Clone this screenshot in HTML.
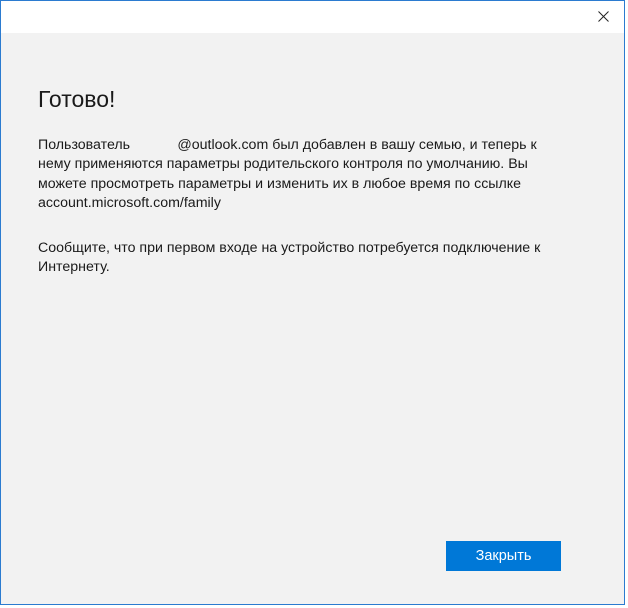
<!DOCTYPE html>
<html><head><meta charset="utf-8"><style>
html,body{margin:0;padding:0;width:628px;height:608px;background:#fff;overflow:hidden}
.win{position:absolute;left:0;top:0;width:623px;height:603px;border:1px solid #2b7bd0;background:#f2f2f2}
.tb{position:absolute;left:0;top:0;width:623px;height:32px;background:#fff}
.x{position:absolute;left:597px;top:10px}
h1{position:absolute;left:37px;top:85px;margin:0;font:23px "Liberation Sans",sans-serif;color:#1a1a1a;letter-spacing:0px}
.p{position:absolute;left:37px;font:14.2px/19.3px "Liberation Sans",sans-serif;color:#1a1a1a;white-space:nowrap}
.btn{position:absolute;left:445px;top:540px;width:115px;height:30px;background:#0078d7;color:#fff;font:14.5px/30px "Liberation Sans",sans-serif;text-align:center}
</style></head><body>
<div class="win">
<div class="tb"><svg class="x" width="11" height="11" viewBox="0 0 11 11"><path d="M0.5 0.5L10.5 10.5M10.5 0.5L0.5 10.5" stroke="#222" stroke-width="1"/></svg></div>
<h1>Готово!</h1>
<div class="p" style="top:135px">Пользователь&nbsp;&nbsp;&nbsp;&nbsp;&nbsp;&nbsp;&nbsp;&nbsp;&nbsp;&nbsp;&nbsp;&nbsp;@outlook.com был добавлен в вашу семью, и теперь к<br>нему применяются параметры родительского контроля по умолчанию. Вы<br>можете просмотреть параметры и изменить их в любое время по ссылке<br>account.microsoft.com/family</div>
<div class="p" style="top:238px">Сообщите, что при первом входе на устройство потребуется подключение к<br>Интернету.</div>
<div class="btn">Закрыть</div>
</div>
</body></html>
